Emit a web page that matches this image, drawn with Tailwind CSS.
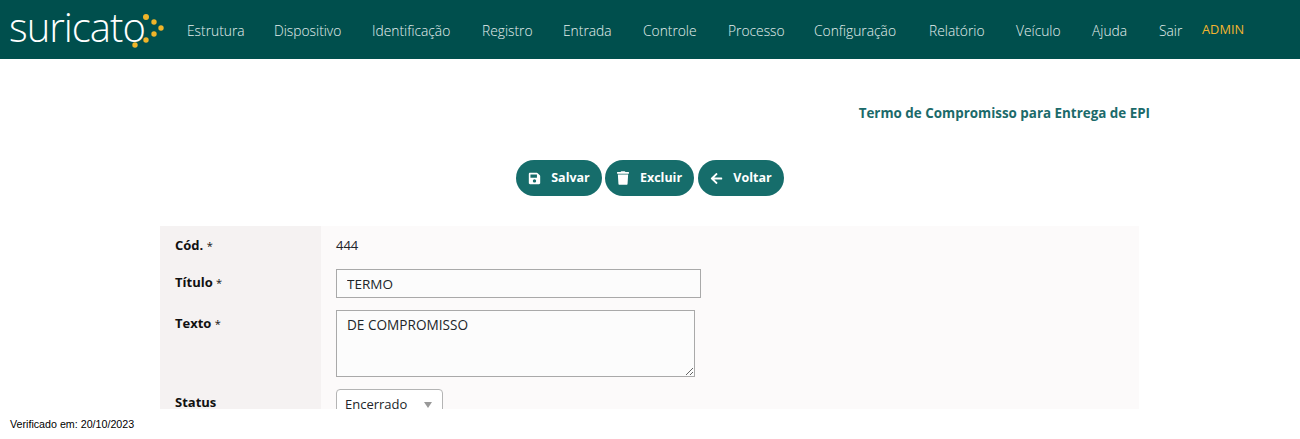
<!DOCTYPE html>
<html lang="pt-BR">
  <head>
    <meta charset="UTF-8" />
    <title>Termo de Compromisso para Entrega de EPI</title>
    <script src="https://cdn.jsdelivr.net/npm/@tailwindcss/browser@4"></script>
  </head>
  <body class="bg-white h-[439px] overflow-hidden flex flex-col font-['Open_Sans',sans-serif] text-[#212529]">
    <!-- header -->
    <header class="h-[59px] bg-[#004f4d] flex items-center shrink-0 text-[#e6f0ef]">
      <div class="relative w-[187px] h-[59px] pl-[9px] flex items-center shrink-0">
        <span class="text-[40px] font-light leading-none tracking-[-1px] text-white -mt-[5px]">suricato</span>
        <svg class="absolute left-[130px] top-[10px] w-[36px] h-[40px]" viewBox="0 0 36 40" fill="#f0b429">
          <circle cx="16" cy="7" r="3" /><circle cx="24" cy="12" r="2.7" /><circle cx="31" cy="18" r="2.7" />
          <circle cx="24" cy="24" r="2.7" /><circle cx="16" cy="30" r="2.7" /><circle cx="5" cy="35" r="2.7" />
        </svg>
      </div>
      <nav class="flex items-center text-[13.8px] font-light whitespace-nowrap pt-[3px]">
        <a class="w-[87px]">Estrutura</a>
        <a class="w-[98px]">Dispositivo</a>
        <a class="w-[110px]">Identificação</a>
        <a class="w-[81px]">Registro</a>
        <a class="w-[80px]">Entrada</a>
        <a class="w-[85px]">Controle</a>
        <a class="w-[86px]">Processo</a>
        <a class="w-[115px]">Configuração</a>
        <a class="w-[87px]">Relatório</a>
        <a class="w-[76px]">Veículo</a>
        <a class="w-[67px]">Ajuda</a>
        <a class="w-[43px]">Sair</a>
        <a class="text-[#f3b52f] text-[12.8px] font-normal -mt-[2px]">ADMIN</a>
      </nav>
    </header>

    <!-- conteudo -->
    <main class="h-[350px] overflow-hidden shrink-0">
      <h1 class="mt-[44px] pr-[150px] text-right text-[13.4px] leading-[20px] font-bold text-[#1b6a6a]">Termo de Compromisso para Entrega de EPI</h1>
      <div class="mt-[37px] flex justify-center gap-[3px] text-white text-[12.5px] font-bold">
        <button class="h-[36px] w-[86px] rounded-full bg-[#166d6b] flex items-center justify-center gap-[10px]">
          <svg class="w-[13px] h-[13px]" viewBox="0 0 448 512" fill="currentColor"><path d="M433.9 129.9l-83.9-83.9A48 48 0 0 0 316.1 32H48C21.5 32 0 53.5 0 80v352c0 26.5 21.5 48 48 48h352c26.5 0 48-21.5 48-48V163.9a48 48 0 0 0-14.1-34zM224 416c-35.3 0-64-28.7-64-64s28.7-64 64-64 64 28.7 64 64-28.7 64-64 64zm96-304.5V212c0 6.6-5.4 12-12 12H76c-6.6 0-12-5.4-12-12V108c0-6.6 5.4-12 12-12h228.5c3.2 0 6.2 1.3 8.5 3.5l3.5 3.5c2.3 2.3 3.5 5.3 3.5 8.5z" /></svg>
          Salvar
        </button>
        <button class="h-[36px] w-[89px] rounded-full bg-[#166d6b] flex items-center justify-center gap-[11px]">
          <svg class="w-[12px] h-[14px]" viewBox="0 0 448 512" fill="currentColor"><path d="M432 32H312l-9.4-18.7A24 24 0 0 0 281.1 0H166.8a23.7 23.7 0 0 0-21.4 13.3L136 32H16A16 16 0 0 0 0 48v32a16 16 0 0 0 16 16h416a16 16 0 0 0 16-16V48a16 16 0 0 0-16-16zM53.2 467a48 48 0 0 0 47.9 45h245.8a48 48 0 0 0 47.9-45L416 128H32z" /></svg>
          Excluir
        </button>
        <button class="ml-px h-[36px] w-[86px] rounded-full bg-[#166d6b] flex items-center justify-center gap-[10px]">
          <svg class="w-[13px] h-[13px]" viewBox="0 0 448 512" fill="currentColor"><path d="M257.5 445.1l-22.2 22.2c-9.4 9.4-24.6 9.4-33.9 0L7 273c-9.4-9.4-9.4-24.6 0-33.9L201.4 44.7c9.4-9.4 24.6-9.4 33.9 0l22.2 22.2c9.5 9.5 9.3 25-.4 34.3L136.6 216H424c13.3 0 24 10.7 24 24v32c0 13.3-10.7 24-24 24H136.6l120.5 114.8c9.8 9.3 10 24.8.4 34.3z" /></svg>
          Voltar
        </button>
      </div>

      <form class="mt-[30px] ml-[160px] w-[979px] flex bg-[#fcfafa] text-[13px] h-[300px]">
        <div class="w-[161px] shrink-0 bg-[#f5f2f2] pl-[15px] font-bold text-[#111]">
          <div class="pt-[9px] h-[46px] leading-[20px]">Cód. <span class="font-normal text-[11px]">*</span></div>
          <div class="h-[41px] leading-[20px]">Título <span class="font-normal text-[11px]">*</span></div>
          <div class="h-[79px] leading-[20px]">Texto <span class="font-normal text-[11px]">*</span></div>
          <div class="leading-[20px]">Status</div>
        </div>
        <div class="pl-[15px] flex flex-col items-start">
          <div class="pt-[9px] h-[43px] leading-[20px]">444</div>
          <input class="h-[29px] w-[365px] border border-[#a9a9a9] bg-[#fcfcfc] px-[10px] text-[13.5px] outline-none" value="TERMO" />
          <textarea class="mt-[12px] h-[67px] w-[359px] border border-[#a9a9a9] bg-[#fcfcfc] px-[10px] py-[5px] text-[13.6px] leading-[18px] outline-none">DE COMPROMISSO</textarea>
          <div class="mt-[12px] h-[30px] w-[107px] border border-[#b4b4b4] rounded-[4px] bg-white pl-[8px] pr-[10px] pt-[2px] flex items-center justify-between">
            <span>Encerrado</span>
            <span class="w-0 h-0 border-x-[4px] border-x-transparent border-t-[6px] border-t-[#999]"></span>
          </div>
        </div>
      </form>
    </main>

    <footer class="pl-[10px] pt-[9px] font-['Liberation_Sans',sans-serif] text-[10.7px] leading-[12px] text-black">Verificado em: 20/10/2023</footer>
  </body>
</html>
